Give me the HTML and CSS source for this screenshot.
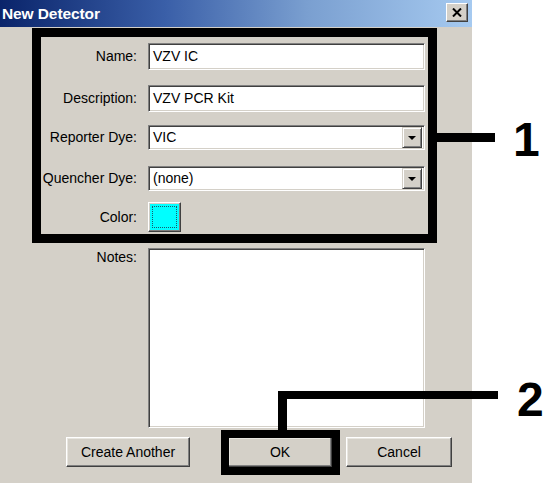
FILE: index.html
```html
<!DOCTYPE html>
<html>
<head>
<meta charset="utf-8">
<link rel="stylesheet" href="styles.css">
</head>
<body>
<div class="screen">
  <div class="dialog">
    <div class="titlebar">
      <span class="title">New Detector</span>
      <div class="close">
        <svg width="10" height="9" viewBox="0 0 10 9"><path d="M1 0.5 L9 8.5 M9 0.5 L1 8.5" stroke="#000" stroke-width="2"/></svg>
      </div>
    </div>
    <div class="body">
      <div class="form">
        <div class="label h27">Name:</div>
        <div class="field text h27">VZV IC</div>

        <div class="label h27">Description:</div>
        <div class="field text h27">VZV PCR Kit</div>

        <div class="label h25">Reporter Dye:</div>
        <div class="field combo h25"><span class="val">VIC</span><span class="drop"><span class="tri"></span></span></div>

        <div class="label h25">Quencher Dye:</div>
        <div class="field combo h25"><span class="val">(none)</span><span class="drop"><span class="tri"></span></span></div>

        <div class="label h30">Color:</div>
        <div class="swatch"><span class="focus"></span></div>

        <div class="label notes-label">Notes:</div>
        <div class="field notes"></div>
      </div>
      <div class="buttons">
        <div class="btn create">Create Another</div>
        <div class="btn ok">OK</div>
        <div class="btn cancel">Cancel</div>
      </div>
    </div>
  </div>

  <div class="mark box1"></div>
  <div class="mark line1"></div>
  <div class="digit d1">1</div>

  <div class="mark box2"></div>
  <div class="mark line2v"></div>
  <div class="mark line2h"></div>
  <div class="digit d2">2</div>
</div>
</body>
</html>
```

FILE: styles.css
```css
html, body {
  margin: 0;
  padding: 0;
  background: #ffffff;
}

.screen {
  position: relative;
  width: 544px;
  height: 483px;
  overflow: hidden;
  background: #ffffff;
  font-family: "Liberation Sans", Arial, sans-serif;
  font-size: 14px;
  color: #000;
}

.dialog {
  width: 472px;
  height: 483px;
  background: #d4d0c8;
}

.titlebar {
  height: 27px;
  display: flex;
  align-items: center;
  padding-left: 2px;
  background: linear-gradient(to right, #0a246a 0%, #3a5fa8 35%, #7a9fd0 65%, #a6caf0 100%);
}

.title {
  color: #ffffff;
  font-weight: bold;
  font-size: 15.5px;
  letter-spacing: -0.1px;
}

.close {
  margin-left: auto;
  margin-right: 4px;
  align-self: flex-start;
  margin-top: 3px;
  width: 22px;
  height: 19px;
  box-sizing: border-box;
  background: #d4d0c8;
  border: 1px solid;
  border-color: #ffffff #404040 #404040 #ffffff;
  box-shadow: inset -1px -1px #808080;
  display: flex;
  align-items: center;
  justify-content: center;
}

.body {
  padding-top: 16px;
}

.form {
  display: grid;
  grid-template-columns: 137px 277px;
  grid-template-rows: 42px 40px 41px 36px 46px 180px;
  column-gap: 11px;
  align-items: start;
}

.label {
  text-align: right;
  white-space: nowrap;
}

.h27 { height: 27px; line-height: 27px; }
.h25 { height: 25px; line-height: 25px; }
.h30 { height: 30px; line-height: 30px; }

.notes-label {
  line-height: 18px;
}

.field {
  box-sizing: border-box;
  background: #ffffff;
  border: 1px solid;
  border-color: #808080 #ffffff #ffffff #808080;
  box-shadow: inset 1px 1px #404040, inset -1px -1px #d4d0c8;
}

.text {
  padding-left: 4px;
  display: flex;
  align-items: center;
}

.combo {
  display: flex;
  align-items: center;
  padding: 2px 2px 2px 4px;
}

.combo .val {
  flex: 1;
}

.drop {
  width: 20px;
  height: 21px;
  box-sizing: border-box;
  background: #d4d0c8;
  border: 1px solid;
  border-color: #d4d0c8 #404040 #404040 #d4d0c8;
  box-shadow: inset 1px 1px #ffffff, inset -1px -1px #808080;
  display: flex;
  align-items: center;
  justify-content: center;
}

.tri {
  width: 0;
  height: 0;
  border-left: 4px solid transparent;
  border-right: 4px solid transparent;
  border-top: 4px solid #000;
}

.swatch {
  width: 33px;
  height: 30px;
  box-sizing: border-box;
  background: #00ffff;
  border: 1px solid;
  border-color: #ffffff #404040 #404040 #ffffff;
  box-shadow: inset -1px -1px #808080, inset 1px 1px #d4d0c8;
  padding: 3px;
}

.focus {
  display: block;
  width: 100%;
  height: 100%;
  box-sizing: border-box;
  border: 1px dotted #1a5a6a;
}

.notes {
  height: 180px;
}

.buttons {
  display: flex;
  margin-top: 9px;
  padding-left: 66px;
}

.btn {
  height: 30px;
  box-sizing: border-box;
  background: #d4d0c8;
  border: 1px solid;
  border-color: #ffffff #404040 #404040 #ffffff;
  box-shadow: inset -1px -1px #808080, inset 1px 1px #e8e6e0;
  display: flex;
  align-items: center;
  justify-content: center;
}

.create { width: 124px; }
.ok { width: 104px; margin-left: 38px; }
.cancel { width: 106px; margin-left: 14px; }

.mark {
  position: absolute;
  background: #000;
  box-sizing: border-box;
}

.box1 {
  left: 32px;
  top: 28px;
  width: 405px;
  height: 215px;
  background: transparent;
  border: 9px solid #000;
}

.line1 {
  left: 437px;
  top: 133px;
  width: 58px;
  height: 9px;
}

.box2 {
  left: 221px;
  top: 430px;
  width: 119px;
  height: 45px;
  background: transparent;
  border: 8px solid #000;
}

.line2v {
  left: 278px;
  top: 391px;
  width: 9px;
  height: 40px;
}

.line2h {
  left: 278px;
  top: 391px;
  width: 220px;
  height: 8px;
}

.digit {
  position: absolute;
  font-family: "Liberation Sans", Arial, sans-serif;
  font-weight: bold;
  font-size: 48px;
  line-height: 48px;
  color: #000;
}

.d1 {
  left: 513px;
  top: 116px;
}

.d2 {
  left: 517px;
  top: 376px;
}
```
